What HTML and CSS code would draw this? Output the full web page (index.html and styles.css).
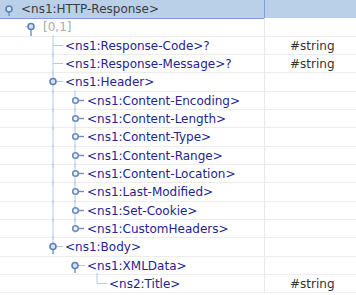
FILE: index.html
```html
<!DOCTYPE html>
<html lang="en">
<head>
    <meta charset="UTF-8">
    <title>Schema Tree</title>
    <link rel="stylesheet" href="styles.css">
</head>
<body>
    <div class="tree">
        <!-- root element, selected -->
        <div class="row selected">
            <div class="name">
                <svg class="guide" width="21" height="18" viewBox="0 0 21 18">
                    <line class="stem" x1="9" y1="12" x2="9" y2="16"/>
                    <circle class="node" cx="9" cy="9" r="3"/>
                </svg>
                <span class="root">&lt;ns1:HTTP-Response&gt;</span>
            </div>
            <div class="type"></div>
        </div>

        <div class="row">
            <div class="name">
                <svg class="guide" width="43" height="18" viewBox="0 0 43 18">
                    <line class="link" x1="25" y1="8.5" x2="29" y2="8.5"/>
                    <line class="stem" x1="31" y1="11" x2="31" y2="18"/>
                    <circle class="node" cx="31" cy="8.5" r="3"/>
                </svg>
                <span class="card">[0,1]</span>
            </div>
            <div class="type"></div>
        </div>

        <div class="row">
            <div class="name">
                <svg class="guide" width="65" height="18" viewBox="0 0 65 18">
                    <line class="link" x1="53" y1="-2" x2="53" y2="20"/>
                    <line class="link" x1="53" y1="8.5" x2="63" y2="8.5"/>
                </svg>
                <span class="el">&lt;ns1:Response-Code&gt;?</span>
            </div>
            <div class="type">#string</div>
        </div>

        <div class="row">
            <div class="name">
                <svg class="guide" width="65" height="18" viewBox="0 0 65 18">
                    <line class="link" x1="53" y1="-2" x2="53" y2="20"/>
                    <line class="link" x1="53" y1="8.5" x2="63" y2="8.5"/>
                </svg>
                <span class="el">&lt;ns1:Response-Message&gt;?</span>
            </div>
            <div class="type">#string</div>
        </div>

        <div class="row">
            <div class="name">
                <svg class="guide" width="65" height="18" viewBox="0 0 65 18">
                    <line class="link" x1="53" y1="-2" x2="53" y2="20"/>
                    <line class="link" x1="55" y1="8.5" x2="63" y2="8.5"/>
                    <circle class="node" cx="53" cy="8.5" r="3"/>
                </svg>
                <span class="el">&lt;ns1:Header&gt;</span>
            </div>
            <div class="type"></div>
        </div>

        <div class="row">
            <div class="name">
                <svg class="guide" width="87" height="18" viewBox="0 0 87 18">
                    <line class="link" x1="53" y1="-2" x2="53" y2="20"/>
                    <line class="link" x1="75" y1="-2" x2="75" y2="20"/>
                    <line class="stub" x1="78" y1="8.5" x2="84" y2="8.5"/>
                    <circle class="attr" cx="75.5" cy="8.5" r="2.8"/>
                </svg>
                <span class="el">&lt;ns1:Content-Encoding&gt;</span>
            </div>
            <div class="type"></div>
        </div>

        <div class="row">
            <div class="name">
                <svg class="guide" width="87" height="18" viewBox="0 0 87 18">
                    <line class="link" x1="53" y1="-2" x2="53" y2="20"/>
                    <line class="link" x1="75" y1="-2" x2="75" y2="20"/>
                    <line class="stub" x1="78" y1="8.5" x2="84" y2="8.5"/>
                    <circle class="attr" cx="75.5" cy="8.5" r="2.8"/>
                </svg>
                <span class="el">&lt;ns1:Content-Length&gt;</span>
            </div>
            <div class="type"></div>
        </div>

        <div class="row">
            <div class="name">
                <svg class="guide" width="87" height="18" viewBox="0 0 87 18">
                    <line class="link" x1="53" y1="-2" x2="53" y2="20"/>
                    <line class="link" x1="75" y1="-2" x2="75" y2="20"/>
                    <line class="stub" x1="78" y1="8.5" x2="84" y2="8.5"/>
                    <circle class="attr" cx="75.5" cy="8.5" r="2.8"/>
                </svg>
                <span class="el">&lt;ns1:Content-Type&gt;</span>
            </div>
            <div class="type"></div>
        </div>

        <div class="row">
            <div class="name">
                <svg class="guide" width="87" height="18" viewBox="0 0 87 18">
                    <line class="link" x1="53" y1="-2" x2="53" y2="20"/>
                    <line class="link" x1="75" y1="-2" x2="75" y2="20"/>
                    <line class="stub" x1="78" y1="8.5" x2="84" y2="8.5"/>
                    <circle class="attr" cx="75.5" cy="8.5" r="2.8"/>
                </svg>
                <span class="el">&lt;ns1:Content-Range&gt;</span>
            </div>
            <div class="type"></div>
        </div>

        <div class="row">
            <div class="name">
                <svg class="guide" width="87" height="18" viewBox="0 0 87 18">
                    <line class="link" x1="53" y1="-2" x2="53" y2="20"/>
                    <line class="link" x1="75" y1="-2" x2="75" y2="20"/>
                    <line class="stub" x1="78" y1="8.5" x2="84" y2="8.5"/>
                    <circle class="attr" cx="75.5" cy="8.5" r="2.8"/>
                </svg>
                <span class="el">&lt;ns1:Content-Location&gt;</span>
            </div>
            <div class="type"></div>
        </div>

        <div class="row">
            <div class="name">
                <svg class="guide" width="87" height="18" viewBox="0 0 87 18">
                    <line class="link" x1="53" y1="-2" x2="53" y2="20"/>
                    <line class="link" x1="75" y1="-2" x2="75" y2="20"/>
                    <line class="stub" x1="78" y1="8.5" x2="84" y2="8.5"/>
                    <circle class="attr" cx="75.5" cy="8.5" r="2.8"/>
                </svg>
                <span class="el">&lt;ns1:Last-Modified&gt;</span>
            </div>
            <div class="type"></div>
        </div>

        <div class="row">
            <div class="name">
                <svg class="guide" width="87" height="18" viewBox="0 0 87 18">
                    <line class="link" x1="53" y1="-2" x2="53" y2="20"/>
                    <line class="link" x1="75" y1="-2" x2="75" y2="20"/>
                    <line class="stub" x1="78" y1="8.5" x2="84" y2="8.5"/>
                    <circle class="attr" cx="75.5" cy="8.5" r="2.8"/>
                </svg>
                <span class="el">&lt;ns1:Set-Cookie&gt;</span>
            </div>
            <div class="type"></div>
        </div>

        <div class="row">
            <div class="name">
                <svg class="guide" width="87" height="18" viewBox="0 0 87 18">
                    <line class="link" x1="53" y1="-2" x2="53" y2="20"/>
                    <line class="link" x1="75" y1="-2" x2="75" y2="13"/>
                    <line class="stub" x1="78" y1="8.5" x2="84" y2="8.5"/>
                    <circle class="attr" cx="75.5" cy="8.5" r="2.8"/>
                </svg>
                <span class="el">&lt;ns1:CustomHeaders&gt;</span>
            </div>
            <div class="type"></div>
        </div>

        <div class="row">
            <div class="name">
                <svg class="guide" width="65" height="18" viewBox="0 0 65 18">
                    <line class="link" x1="53" y1="-2" x2="53" y2="8"/>
                    <line class="link" x1="55" y1="8.5" x2="63" y2="8.5"/>
                    <line class="stem" x1="53" y1="11" x2="53" y2="16"/>
                    <circle class="node" cx="53" cy="8.5" r="3"/>
                </svg>
                <span class="el">&lt;ns1:Body&gt;</span>
            </div>
            <div class="type"></div>
        </div>

        <div class="row">
            <div class="name">
                <svg class="guide" width="87" height="18" viewBox="0 0 87 18">
                    <line class="link" x1="77" y1="8.5" x2="85" y2="8.5"/>
                    <line class="stem" x1="75" y1="11" x2="75" y2="16"/>
                    <circle class="node" cx="75" cy="8.5" r="3"/>
                </svg>
                <span class="el">&lt;ns1:XMLData&gt;</span>
            </div>
            <div class="type"></div>
        </div>

        <div class="row">
            <div class="name">
                <svg class="guide" width="109" height="18" viewBox="0 0 109 18">
                    <line class="link" x1="97" y1="-2" x2="97" y2="8.5"/>
                    <line class="link" x1="97" y1="8.5" x2="107" y2="8.5"/>
                </svg>
                <span class="el">&lt;ns2:Title&gt;</span>
            </div>
            <div class="type">#string</div>
        </div>
    </div>
</body>
</html>
```

FILE: styles.css
```css
body {
    margin: 0;
    padding: 0;
    background-color: #fff;
    font-family: "DejaVu Sans", sans-serif;
    font-size: 12px;
}
.tree {
    width: 356px;
}
.row {
    display: grid;
    grid-template-columns: 265px 1fr;
    height: 18.33px;
    box-sizing: border-box;
    border-bottom: 1px solid #ececec;
}
.row.selected {
    background: #b9d0e8;
    border-bottom-color: #b9d0e8;
}
.name {
    display: flex;
    align-items: center;
    border-right: 1px solid #e8e8e8;
    white-space: nowrap;
}
.selected .name {
    box-sizing: border-box;
    border: 1px solid #7f9dd0;
    border-left: 0;
    border-top: 0;
}
.guide {
    flex: none;
    align-self: flex-start;
    overflow: visible;
}
.type {
    display: flex;
    align-items: center;
    padding-left: 25px;
    color: #333;
}
.root {
    color: #3c3c3c;
}
.el {
    color: #24248f;
}
.card {
    color: #ababab;
}
.link {
    stroke: #b3cae4;
    stroke-width: 1;
}
.stem, .stub {
    stroke: #6f8fbf;
    stroke-width: 1.4;
}
.node {
    fill: #d4e2f4;
    stroke: #5a82ba;
    stroke-width: 1.6;
}
.attr {
    fill: #eef3fa;
    stroke: #6d8bbb;
    stroke-width: 1.6;
}
```
